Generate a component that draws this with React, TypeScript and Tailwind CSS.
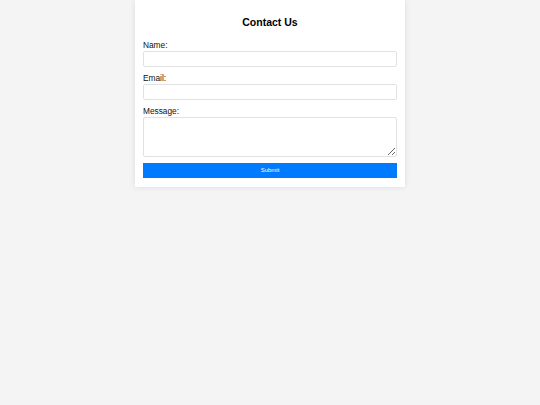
export default function App() {
  return (
    <div className="min-h-screen bg-[#f4f4f4] font-['Liberation_Sans',Arial,sans-serif]">
      <div className="mx-auto w-[270px] bg-white px-2 pt-[15px] pb-[9px] shadow-[0_0_6px_rgba(0,0,0,0.1)]">
        <h1 className="text-center text-[10.5px] font-bold leading-[15px] text-black">Contact Us</h1>
        <form className="mt-[10px] flex flex-col">
          <label className="block h-[11px] text-[8.3px] leading-[10px] text-[#111]">Name:</label>
          <input
            type="text"
            className="block h-[16px] w-full rounded-[2px] border border-[#e2e2e2] bg-white"
          />
          <label className="mt-[6px] block h-[11px] text-[8.3px] leading-[10px] text-[#111]">Email:</label>
          <input
            type="email"
            className="block h-[16px] w-full rounded-[2px] border border-[#e2e2e2] bg-white"
          />
          <label className="mt-[6px] block h-[11px] text-[8.3px] leading-[10px] text-[#111]">Message:</label>
          <textarea className="block h-[40px] w-full rounded-[2px] border border-[#e2e2e2] bg-white" />
          <button
            type="button"
            className="mt-[6px] block h-[15px] w-full bg-[#007bff] text-[6px] leading-[15px] text-white"
          >
            Submit
          </button>
        </form>
      </div>
    </div>
  );
}
